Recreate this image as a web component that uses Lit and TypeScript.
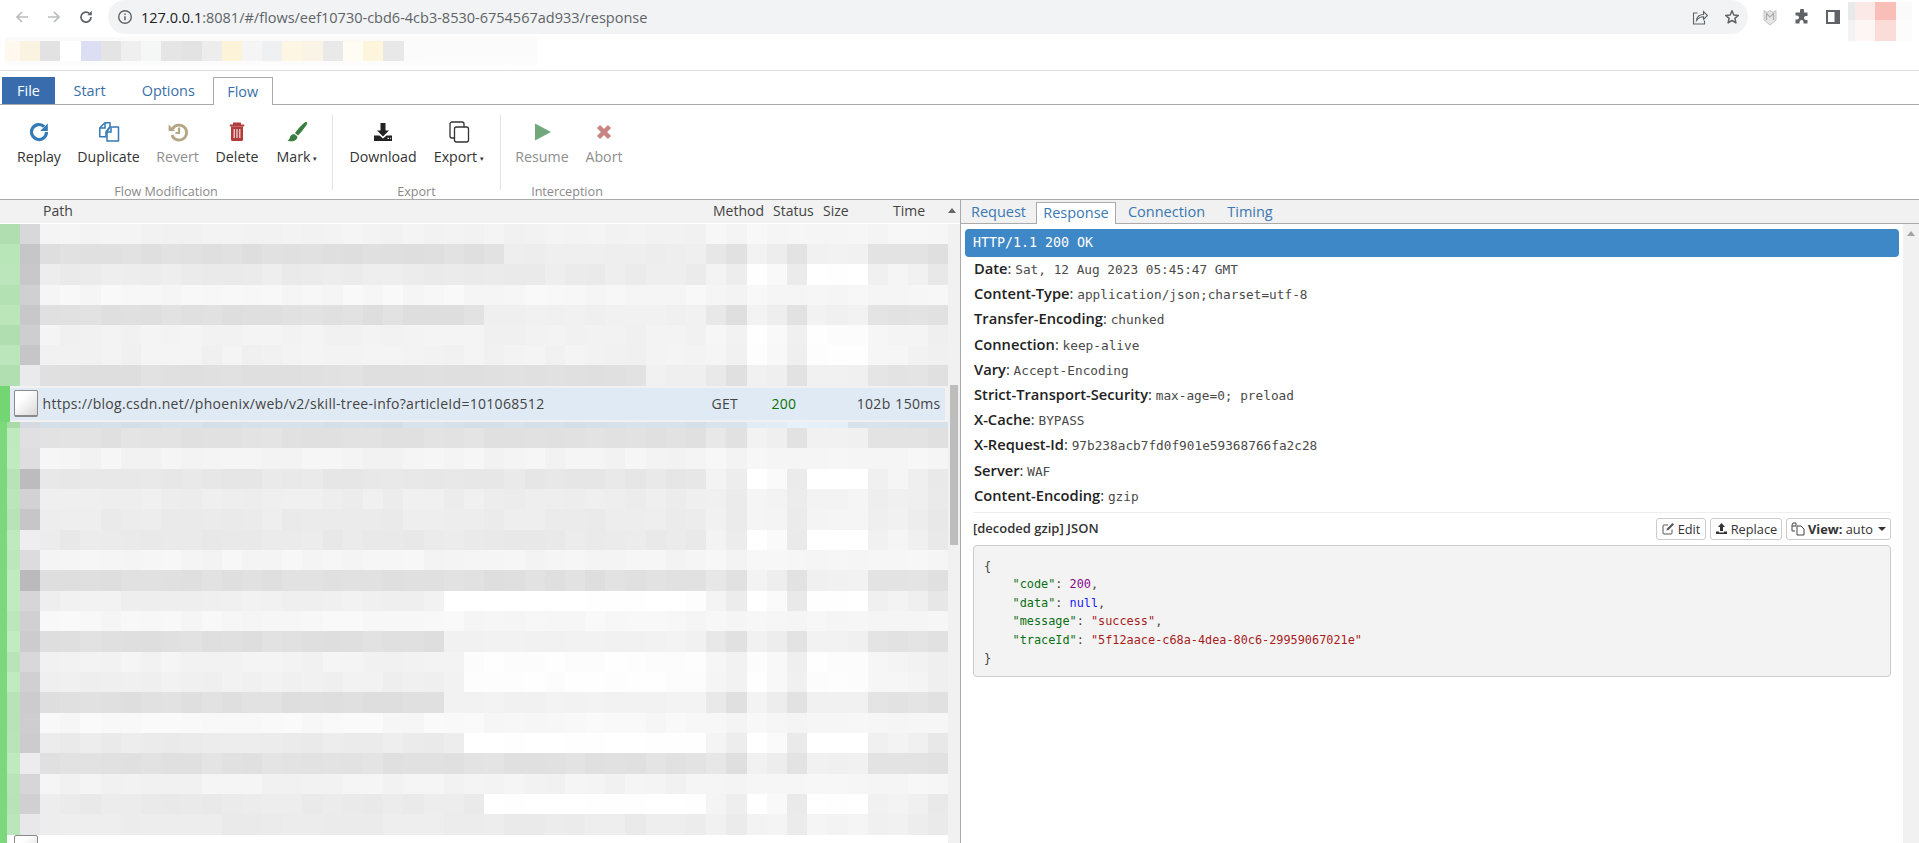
import { LitElement, html, css, svg } from "lit";
import { customElement } from "lit/decorators.js";

const hash = (a: number, b: number) => {
  let h = (a * 7919 + b * 104729 + 13) ^ (a * b * 31);
  h = (h ^ (h >>> 3)) * 2654435761;
  return (h >>> 8) & 0xffff;
};
const vary = (g: number, a: number, b: number, amp = 2) => {
  const h = hash(a, b);
  const d = (h % (amp * 2 + 1)) - amp;
  const v = Math.min(255, g + d);
  return `rgb(${v},${v},${Math.min(255, v + ((h >> 5) % 2))})`;
};

type Kind = "dark" | "light" | "white" | "mid" | "soft";
const SUFFIX: Record<Kind, number[]> = {
  dark: [232, 224, 242, 238, 226, 241, 241, 241, 228, 226, 228, 224],
  light: [246, 244, 247, 246, 245, 246, 246, 246, 245, 246, 246, 246],
  white: [243, 237, 255, 249, 234, 255, 255, 255, 241, 244, 240, 232],
  mid: [241, 236, 244, 243, 235, 244, 244, 244, 239, 240, 238, 233],
  soft: [245, 241, 253, 249, 240, 253, 253, 253, 246, 245, 243, 240],
};
interface RowDef { l: number; p: number; end?: number; t?: number; s: Kind; }
const TOP: RowDef[] = [
  { l: 216, p: 243, s: "light" },
  { l: 198, p: 224, end: 23, t: 238, s: "dark" },
  { l: 200, p: 236, s: "white" },
  { l: 208, p: 247, s: "light" },
  { l: 200, p: 224, end: 22, t: 240, s: "dark" },
  { l: 206, p: 242, s: "soft" },
  { l: 198, p: 242, s: "soft" },
  { l: 234, p: 224, end: 30, t: 240, s: "dark" },
];
const BOTTOM: RowDef[] = [
  { l: 224, p: 226, s: "dark" },
  { l: 222, p: 244, s: "light" },
  { l: 188, p: 232, s: "white" },
  { l: 210, p: 238, s: "mid" },
  { l: 198, p: 236, s: "mid" },
  { l: 238, p: 234, s: "white" },
  { l: 220, p: 245, s: "light" },
  { l: 186, p: 224, s: "dark" },
  { l: 214, p: 240, end: 20, t: 254, s: "white" },
  { l: 208, p: 247, s: "light" },
  { l: 204, p: 224, end: 20, t: 242, s: "dark" },
  { l: 216, p: 243, end: 21, t: 253, s: "soft" },
  { l: 208, p: 240, end: 21, t: 253, s: "soft" },
  { l: 204, p: 224, end: 20, t: 242, s: "dark" },
  { l: 206, p: 248, s: "light" },
  { l: 204, p: 236, end: 21, t: 255, s: "white" },
  { l: 236, p: 226, s: "dark" },
  { l: 214, p: 243, s: "light" },
  { l: 208, p: 235, end: 22, t: 255, s: "white" },
  { l: 232, p: 236, s: "mid" },
];
const BOOK = ["#fff8ee", "#fbf3e2", "#e2e2e2", "#ffffff", "#dcdff4", "#e4e4e4", "#efefef", "#f5f6f6", "#e6e5e5", "#e4e3e3", "#ecedec", "#fdf3d8", "#f6f5f6", "#eef0f1", "#fdf6e3", "#faf4e6", "#e9e9e9", "#fefcf3", "#fdf5dc", "#e8e8e8", "#fbfbfb"];
const AVATAR = ["#e8eae9", "#fbe9e8", "#fabeb8", "#fafafa", "#f3f3f3", "#fef5f5", "#fcdcd9", "#fcfcfc"];

const HEADERS: [string, string][] = [
  ["Date", "Sat, 12 Aug 2023 05:45:47 GMT"],
  ["Content-Type", "application/json;charset=utf-8"],
  ["Transfer-Encoding", "chunked"],
  ["Connection", "keep-alive"],
  ["Vary", "Accept-Encoding"],
  ["Strict-Transport-Security", "max-age=0; preload"],
  ["X-Cache", "BYPASS"],
  ["X-Request-Id", "97b238acb7fd0f901e59368766fa2c28"],
  ["Server", "WAF"],
  ["Content-Encoding", "gzip"],
];

const icons: Record<string, unknown> = {
  replay: svg`<path d="M19.5 12a7.5 7.5 0 1 1-2.3-5.4" fill="none" stroke="#337ab7" stroke-width="3.2"/><path d="M20.8 3.5v7.6h-7.6z" fill="#337ab7"/>`,
  duplicate: svg`<g fill="#fff" stroke="#337ab7" stroke-width="1.5" stroke-linejoin="round"><path d="M8 2.8h5v4l-4 5v5H2.8v-9z"/><path d="M13 7h8.5v14H10v-9.5z"/></g><path d="M8 3v5H3M14 7.5v4.500h-4" fill="none" stroke="#337ab7" stroke-width="1.5"/>`,
  revert: svg`<path d="M6.500 9a7.500 7.500 0 1 1-.5 6" fill="none" stroke="#b5a684" stroke-width="2.800"/><path d="M2.600 4.500v6.500h6.500z" fill="#b5a684"/><path d="M13 7.500v5.500h-3.500" fill="none" stroke="#b5a684" stroke-width="2.200"/>`,
  trash: svg`<path d="M9 5V3.600h6V5M4.800 5.500h14.400" fill="none" stroke="#b23c3c" stroke-width="2"/><path d="M6 6.500h12v13a1.500 1.500 0 0 1-1.500 1.500h-9A1.500 1.500 0 0 1 6 19.500z" fill="#b23c3c"/><path d="M9.200 9v9M12 9v9M14.800 9v9" stroke="#f5e4e4" stroke-width="1.200"/>`,
  brush: svg`<path d="M22 2.500c-.5-.8-2-.5-3 .5-3 2.500-7 7-9 10l3 2.500c3-3 7-8 8.800-11 .4-.8.600-1.500.2-2z" fill="#3d7d41"/><path d="M9 14c-2.500.3-3.800 2-4.200 3.700C4.500 19 3.800 20 2.500 20.500c3 1.500 7.500 1 9.200-1.500.8-1.300.8-2.200.3-3z" fill="#3d7d41"/>`,
  download: svg`<path d="M9.500 3h5v7.500H18l-6 6-6-6h3.500z" fill="#222"/><path d="M3 15.500h5.500l3.500 3 3.500-3H21V21H3z" fill="#222"/><path d="M16.500 18.300h1.500M19 18.300h.8" stroke="#fff" stroke-width="1.200"/>`,
  clone: svg`<rect x="7.500" y="7" width="14" height="15" rx="2" fill="#fff" stroke="#333" stroke-width="1.300"/><path d="M7.500 18H5a2 2 0 0 1-2-2V4a2 2 0 0 1 2-2h10a2 2 0 0 1 2 2v3" fill="none" stroke="#333" stroke-width="1.300"/>`,
  play: svg`<path d="M5 3.500 21 12 5 20.500z" fill="#72a77c"/>`,
  times: svg`<path d="M6.500 6.500 17.500 17.500M17.500 6.500 6.500 17.500" stroke="#c98484" stroke-width="4.500"/>`,
};

@customElement("app-root")
export class AppRoot extends LitElement {
  static styles = css`
    :host { display: block; height: 843px; overflow: hidden; background: #fff; font-family: "Open Sans", "Noto Sans", sans-serif; color: #333; font-size: 14px; }
    .toolbar { display: flex; height: 34px; padding-left: 6px; }
    .nav { width: 32px; height: 34px; display: flex; align-items: center; justify-content: center; flex: none; }
    .nav.gap { margin-left: 6px; }
    .nav.narrow { width: 30px; }
    .pill { flex: none; width: 1640px; margin-left: 6px; height: 34px; background: #f1f3f4; border-radius: 17px; display: flex; align-items: center; padding: 0 0 0 9px; box-sizing: border-box; }
    .url { margin-left: 8px; font-size: 14.500px; color: #5f6368; flex: 1; white-space: nowrap; }
    .url b { font-weight: 400; color: #202124; }
    .pillicon { width: 32px; height: 34px; display: flex; align-items: center; justify-content: center; }
    .avatar { display: grid; grid-template-columns: 7px 20px 21px 16px; grid-template-rows: 18px 21px; height: 39px; margin-top: 2px; position: relative; z-index: 1; }
    .bookbar { height: 37px; border-bottom: 1px solid #dedede; padding: 3px 0 0 5px; box-sizing: border-box; }
    .bookstrip { width: 532px; height: 28px; background: linear-gradient(#fafafa, #fcfcfc); padding-top: 4px; box-sizing: border-box; display: flex; }
    .bookstrip i { display: block; width: 20.200px; height: 20px; flex: none; }
    .bookstrip i:first-child { width: 15px; }
    .menu { border-bottom: 1px solid #aaa; padding: 6px 0 0 2px; display: flex; height: 27px; }
    .mt { height: 27px; line-height: 27px; text-align: center; color: #396fa8; font-size: 14.400px; box-sizing: border-box; }
    .mt.file { width: 53px; background: #396cad; color: #fff; }
    .mt.start { width: 69px; }
    .mt.options { width: 88.500px; }
    .mt.flow { width: 60.500px; background: #fff; border: 1px solid #aaa; border-bottom: 0; height: 28px; }
    .ribbon { height: 94px; border-bottom: 1px solid #aaa; display: flex; }
    .group { display: flex; flex-direction: column; align-items: stretch; flex: none; box-sizing: border-box; }
    .btns { display: flex; height: 79px; padding-top: 15px; box-sizing: border-box; }
    .g1 { width: 332px; padding-left: 9px; }
    .g2 { width: 167px; padding-left: 10px; }
    .g3 { width: 132px; padding-left: 7px; }
    .btn { display: flex; flex-direction: column; align-items: center; color: #333; font-size: 14.200px; white-space: nowrap; }
    .btn svg { display: block; width: 24px; height: 24px; margin-bottom: 3px; }
    .btn.off { color: #8f8f8f; }
    .caret { font-size: 7px; margin-left: 3px; vertical-align: 1px; }
    .glabel { color: #8a8a8a; font-size: 12.600px; text-align: center; line-height: 14px; margin-top: 2px; white-space: nowrap; }
    .g1 .glabel { margin-left: -9px; }
    .g2 .glabel { margin-left: -10px; }
    .g3 .glabel { margin-left: -7px; }
    .sep { width: 1px; height: 75px; margin-top: 10px; background: #e3e3e3; flex: none; }
    .main { display: flex; height: 643px; }
    .left { width: 960px; flex: none; border-right: 1px solid #aaa; display: flex; flex-direction: column; overflow: hidden; }
    .thead { height: 23px; flex: none; background: #f2f2f2; display: flex; line-height: 21px; font-size: 14px; color: #444; border-bottom: 1px solid #fff; }
    .thead span, .sel span { display: block; white-space: nowrap; flex: none; }
    .c-path { width: 670px; padding-left: 43px; }
    .c-meth { width: 60px; }
    .c-stat { width: 50px; }
    .c-size { width: 70px; }
    .c-time { width: 50px; }
    .arrow { width: 0; height: 0; border: 4px solid transparent; border-bottom: 5px solid #666; border-top: 0; margin: 8px 0 0 5px; flex: none; }
    .tbody { flex: 1; display: flex; min-height: 0; }
    .rows { width: 948px; flex: none; background: #fff; }
    .r { display: flex; }
    .r.top { height: 20.200px; }
    .r.bot { height: 20.350px; }
    .r.band { height: 6px; }
    .r i { display: block; flex: none; height: 100%; }
    .c0 { width: 20px; }
    .c0a { width: 7px; background: #7bd97b; }
    .c0b { width: 13px; }
    .c1 { width: 20px; }
    .cn { width: 20.200px; }
    .selwrap { height: 36.400px; background: #f1f1f1; display: flex; }
    .selbar { width: 10px; background: #73d673; flex: none; }
    .sel { margin-top: 2px; height: 32.300px; width: 935px; background: #e0eaf4; display: flex; align-items: center; font-size: 14px; letter-spacing: .3px; color: #444; flex: none; }
    .chk { width: 24px; height: 27px; box-sizing: border-box; border: 1px solid #8a8a8a; border-bottom-width: 2px; border-radius: 2px; background: linear-gradient(135deg, #fff 30%, #d8d8d8); margin: 0 4.500px 0 4px; flex: none; }
    .s-path { width: 669px; overflow: hidden; }
    .s-meth { width: 60px; }
    .s-stat { width: 50px; color: #0a730a; }
    .s-size { width: 69px; text-align: right; }
    .s-time { width: 50px; text-align: right; }
    .last { height: 8px; display: flex; }
    .lastbar { width: 7px; background: #7bd97b; flex: none; }
    .chk2 { width: 24px; height: 24px; margin-left: 7px; box-sizing: border-box; border: 1px solid #8a8a8a; border-radius: 2px; background: linear-gradient(135deg, #fff 30%, #d8d8d8); flex: none; }
    .track { width: 12px; background: #f1f1f1; flex: none; padding: 161px 2px 0; box-sizing: border-box; }
    .thumb { height: 160px; background: #bdbdbd; width: 8px; }
    .right { flex: 1; display: flex; flex-direction: column; min-width: 0; }
    .tabs { height: 23px; flex: none; background: #f1f1f1; border-bottom: 1px solid #aaa; display: flex; font-size: 14.500px; color: #3a78b3; }
    .tab { height: 21px; margin-top: 2px; line-height: 20px; flex: none; text-align: center; box-sizing: border-box; }
    .tab.req { width: 75px; }
    .tab.res { width: 80px; background: #fff; border: 1px solid #aaa; border-bottom: 0; height: 22px; }
    .tab.con { width: 101px; }
    .tab.tim { width: 66px; }
    .rbody { flex: 1; display: flex; min-height: 0; }
    .content { flex: 1; min-width: 0; }
    .rtrack { width: 16px; background: #f1f1f1; flex: none; display: flex; justify-content: center; padding-top: 7px; box-sizing: border-box; }
    .rarrow { width: 0; height: 0; border: 4px solid transparent; border-top: 0; border-bottom: 5px solid #a3a3a3; }
    .first { margin: 5px 4px 0; height: 28px; background: #3f88c8; border-radius: 4px; color: #fff; font: 13.300px/28px "DejaVu Sans Mono", monospace; padding-left: 8px; white-space: pre; }
    .heads { padding: 0 0 0 13px; }
    .h { height: 25.200px; line-height: 23.500px; white-space: nowrap; font-size: 14.700px; color: #333; }
    .h b { font-weight: 600; color: #222; }
    .h code { font: 12.750px "DejaVu Sans Mono", monospace; color: #4a4a4a; }
    .ctrl { margin: 3px 12px 0; border-top: 1px solid #eee; display: flex; align-items: center; justify-content: space-between; height: 33px; box-sizing: border-box; }
    .ctitle { font-size: 13px; font-weight: 600; color: #333; line-height: 30px; align-self: flex-start; }
    .cbtns { display: flex; gap: 4px; }
    .cb { height: 22px; border: 1px solid #ccc; border-radius: 3px; display: flex; align-items: center; justify-content: center; font-size: 12.800px; color: #333; box-sizing: border-box; white-space: nowrap; gap: 3px; }
    .cb svg { display: block; flex: none; }
    .cb.edit { width: 50px; }
    .cb.rep { width: 72px; }
    .cb.view { width: 105px; }
    .cb b { font-weight: 700; }
    .cb .dn { width: 0; height: 0; border: 4px solid transparent; border-top: 4px solid #333; border-bottom: 0; margin-left: 2px; }
    .pre { margin: 0 12px; height: 132px; box-sizing: border-box; background: #f3f3f3; border: 1px solid #ccc; border-radius: 4px; padding: 11px 0 0 10px; font: 11.850px/18.500px "DejaVu Sans Mono", monospace; color: #444; }
    .ln { height: 18.500px; white-space: pre; }
    .ln.in { padding-left: 28.500px; }
    .k { color: #0a7014; }
    .n { color: #8a0a8a; }
    .nl { color: #1a1aff; }
    .st { color: #a81c1c; }
  `;

  private cells(def: RowDef, idx: number) {
    const out: unknown[] = [];
    const end = def.end ?? 33;
    for (let i = 0; i < 33; i++) {
      const base = i < end ? def.p : def.t ?? def.p;
      const amp = i < end ? 2 : 1;
      out.push(html`<i class="cn" style="background:${vary(base, idx, i, amp)}"></i>`);
    }
    SUFFIX[def.s].forEach((g, i) => {
      out.push(html`<i class="cn" style="background:${vary(g, idx, i + 40, 1)}"></i>`);
    });
    return out;
  }

  private topRow(def: RowDef, i: number) {
    const g = 194 + (hash(i, 3) % 14);
    return html`<div class="r top">
      <i class="c0" style="background:rgb(${g - 20},${Math.min(230, g + 26)},${g - 20})"></i>
      <i class="c1" style="background:rgb(${def.l},${def.l},${def.l + 3})"></i>
      ${this.cells(def, i)}
    </div>`;
  }

  private botRow(def: RowDef, i: number) {
    const g = 184 + (hash(i, 9) % 10);
    return html`<div class="r bot">
      <i class="c0a"></i>
      <i class="c0b" style="background:rgb(${g},${g + 42},${g})"></i>
      <i class="c1" style="background:rgb(${def.l},${def.l},${def.l + 3})"></i>
      ${this.cells(def, i + 20)}
    </div>`;
  }

  private band() {
    const cols = [];
    for (let i = 0; i < 45; i++) {
      const light = i >= 35 && i < 40;
      const base = light ? 226 : 212;
      const v = base + (hash(i, 77) % 6);
      cols.push(html`<i class="cn" style="background:rgb(${v},${v + 10},${v + 18})"></i>`);
    }
    return html`<div class="r band">
      <i class="c0a"></i>
      <i class="c0b" style="background:#a8dba8"></i>
      <i class="c1" style="background:#d4dae0"></i>
      ${cols}
    </div>`;
  }

  private ic(name: string) {
    return html`<svg viewBox="0 0 24 24">${icons[name]}</svg>`;
  }

  render() {
    return html`
      <div class="toolbar">
        <div class="nav"><svg width="16" height="16" viewBox="0 0 16 16"><path d="M14 8H3M8 3 3 8l5 5" fill="none" stroke="#babcbe" stroke-width="1.700"/></svg></div>
        <div class="nav"><svg width="16" height="16" viewBox="0 0 16 16"><path d="M2 8h11M8 3l5 5-5 5" fill="none" stroke="#babcbe" stroke-width="1.700"/></svg></div>
        <div class="nav"><svg width="16" height="16" viewBox="0 0 16 16"><path d="M13 8a5 5 0 1 1-1.500-3.500" fill="none" stroke="#5f6368" stroke-width="1.700"/><path d="M13.800 1.800v4.500H9.300z" fill="#5f6368"/></svg></div>
        <div class="pill">
          <svg width="16" height="16" viewBox="0 0 16 16"><circle cx="8" cy="8" r="6.300" fill="none" stroke="#5f6368" stroke-width="1.400"/><path d="M8 7.200v4M8 4.600v1.400" stroke="#5f6368" stroke-width="1.500"/></svg>
          <div class="url"><b>127.0.0.1</b>:8081/#/flows/eef10730-cbd6-4cb3-8530-6754567ad933/response</div>
          <div class="pillicon"><svg width="16" height="16" viewBox="0 0 16 16"><path d="M5.500 4H1.500v11h11v-3.500" fill="none" stroke="#5f6368" stroke-width="1.100"/><path d="M4.500 11.500c.5-4 3.500-6 7-6V2.500l4 4-4 4V7.800c-2.800 0-5 1-7 3.700z" fill="none" stroke="#5f6368" stroke-width="1.100"/></svg></div>
          <div class="pillicon"><svg width="16" height="16" viewBox="0 0 16 16"><path d="M8 1.800l1.800 4.200 4.500.4-3.400 3 1 4.500L8 11.500l-3.900 2.400 1-4.500-3.400-3 4.500-.4z" fill="none" stroke="#5f6368" stroke-width="1.500" stroke-linejoin="round"/></svg></div>
        </div>
        <div class="nav gap"><svg width="14" height="17" viewBox="0 0 14 17"><path d="M1 1.500 4 3.500 7 1.500 10 3.500 13 1.500V11L7 16 1 11z" fill="#e6e6e6" stroke="#c2c2c2" stroke-width="1"/><path d="M3.500 11V4.500L7 8l3.500-3.500V11" fill="none" stroke="#aaa" stroke-width="1.200"/></svg></div>
        <div class="nav"><svg width="16" height="16" viewBox="0 0 16 16"><path d="M6 1.500a2 2 0 0 1 4 0V3.500h3.500V7h-1.500a2 2 0 0 0 0 4h1.500v3.500H9.500V13a2 2 0 0 0-4 0v1.500H1.500V10.500H3a2 2 0 0 0 0-4H1.500V3.500H6z" fill="#5f6368"/></svg></div>
        <div class="nav narrow"><svg width="14" height="14" viewBox="0 0 14 14"><rect width="14" height="14" fill="#5f6368"/><rect x="2" y="2" width="6.500" height="10" fill="#fff"/></svg></div>
        <div class="avatar">${AVATAR.map((c) => html`<i style="background:${c}"></i>`)}</div>
      </div>
      <div class="bookbar"><div class="bookstrip">${BOOK.map((c) => html`<i style="background:${c}"></i>`)}</div></div>
      <div class="menu">
        <div class="mt file">File</div><div class="mt start">Start</div><div class="mt options">Options</div><div class="mt flow">Flow</div>
      </div>
      <div class="ribbon">
        <div class="group g1">
          <div class="btns">
            <div class="btn" style="width:60px">${this.ic("replay")}Replay</div>
            <div class="btn" style="width:79px">${this.ic("duplicate")}Duplicate</div>
            <div class="btn off" style="width:59px">${this.ic("revert")}Revert</div>
            <div class="btn" style="width:60px">${this.ic("trash")}Delete</div>
            <div class="btn" style="width:60px">${this.ic("brush")}<span>Mark<span class="caret">▾</span></span></div>
          </div>
          <div class="glabel">Flow Modification</div>
        </div>
        <div class="sep"></div>
        <div class="group g2">
          <div class="btns">
            <div class="btn" style="width:80px">${this.ic("download")}Download</div>
            <div class="btn" style="width:72px">${this.ic("clone")}<span>Export<span class="caret">▾</span></span></div>
          </div>
          <div class="glabel">Export</div>
        </div>
        <div class="sep"></div>
        <div class="group g3">
          <div class="btns">
            <div class="btn off" style="width:68px">${this.ic("play")}Resume</div>
            <div class="btn off" style="width:56px">${this.ic("times")}Abort</div>
          </div>
          <div class="glabel">Interception</div>
        </div>
      </div>
      <div class="main">
        <div class="left">
          <div class="thead">
            <span class="c-path">Path</span><span class="c-meth">Method</span><span class="c-stat">Status</span><span class="c-size">Size</span><span class="c-time">Time</span><div class="arrow"></div>
          </div>
          <div class="tbody">
            <div class="rows">
              ${TOP.map((d, i) => this.topRow(d, i))}
              <div class="selwrap">
                <div class="selbar"></div>
                <div class="sel">
                  <div class="chk"></div>
                  <span class="s-path">https://blog.csdn.net//phoenix/web/v2/skill-tree-info?articleId=101068512</span>
                  <span class="s-meth">GET</span><span class="s-stat">200</span><span class="s-size">102b</span><span class="s-time">150ms</span>
                </div>
              </div>
              ${this.band()}
              ${BOTTOM.map((d, i) => this.botRow(d, i))}
              <div class="last"><div class="lastbar"></div><div class="chk2"></div></div>
            </div>
            <div class="track"><div class="thumb"></div></div>
          </div>
        </div>
        <div class="right">
          <div class="tabs">
            <div class="tab req">Request</div><div class="tab res">Response</div><div class="tab con">Connection</div><div class="tab tim">Timing</div>
          </div>
          <div class="rbody">
            <div class="content">
              <div class="first">HTTP/1.1 200 OK</div>
              <div class="heads">
                ${HEADERS.map(([k, v]) => html`<div class="h"><b>${k}</b>: <code>${v}</code></div>`)}
              </div>
              <div class="ctrl">
                <div class="ctitle">[decoded gzip] JSON</div>
                <div class="cbtns">
                  <div class="cb edit"><svg width="13" height="13" viewBox="0 0 13 13"><path d="M10 7.500V11a1 1 0 0 1-1 1H2a1 1 0 0 1-1-1V4a1 1 0 0 1 1-1h4" fill="none" stroke="#555" stroke-width="1"/><path d="M4.500 8.500 5 6.500 10.500 1l1.500 1.500L6.500 8z" fill="#555"/></svg>Edit</div>
                  <div class="cb rep"><svg width="13" height="13" viewBox="0 0 13 13"><path d="M6.500 1 10 5H8v4H5V5H3z" fill="#333"/><path d="M1 9.500h3v1h5v-1h3V12H1z" fill="#333"/></svg>Replace</div>
                  <div class="cb view"><svg width="14" height="14" viewBox="0 0 14 14"><path d="M5 1H2L1 3v6h3M5 1v3H1" fill="none" stroke="#444" stroke-width="1"/><path d="M6 4h4l3 3v6H6z" fill="#fff" stroke="#444" stroke-width="1"/></svg><span><b>View:</b> auto</span><i class="dn"></i></div>
                </div>
              </div>
              <div class="pre">
                <div class="ln">{</div>
                <div class="ln in"><span class="k">"code"</span>: <span class="n">200</span>,</div>
                <div class="ln in"><span class="k">"data"</span>: <span class="nl">null</span>,</div>
                <div class="ln in"><span class="k">"message"</span>: <span class="st">"success"</span>,</div>
                <div class="ln in"><span class="k">"traceId"</span>: <span class="st">"5f12aace-c68a-4dea-80c6-29959067021e"</span></div>
                <div class="ln">}</div>
              </div>
            </div>
            <div class="rtrack"><div class="rarrow"></div></div>
          </div>
        </div>
      </div>
    `;
  }
}
